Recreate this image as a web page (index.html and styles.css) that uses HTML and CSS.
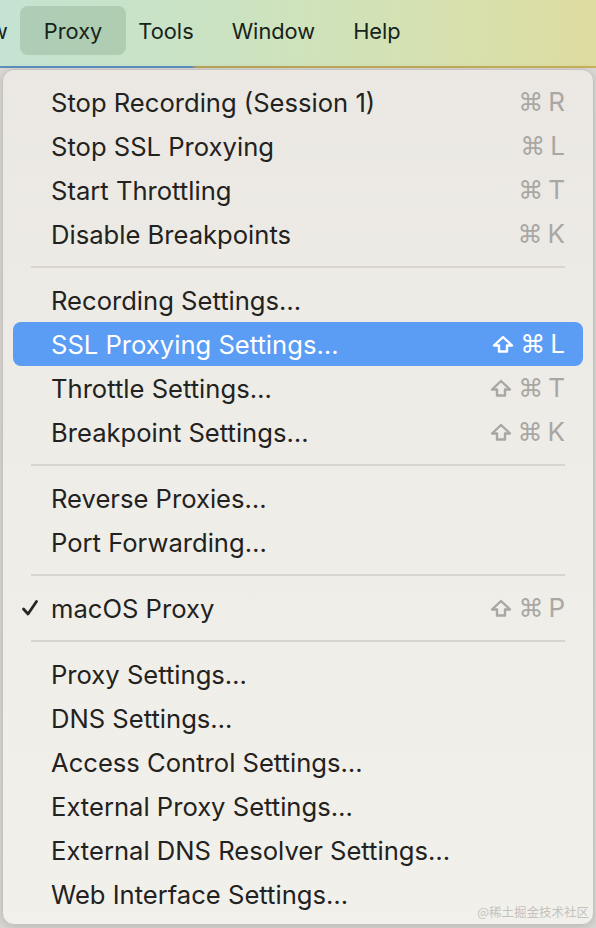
FILE: index.html
```html
<!DOCTYPE html>
<html>
<head>
<meta charset="utf-8">
<link rel="stylesheet" href="styles.css">
</head>
<body>
<div class="screen">
  <div class="menubar">
    <span class="mb-item mb-cut">w</span>
    <span class="mb-item mb-active">Proxy</span>
    <span class="mb-item">Tools</span>
    <span class="mb-item">Window</span>
    <span class="mb-item">Help</span>
  </div>
  <div class="under"></div>
  <div class="menu">
    <div class="row"><span class="check"></span><span class="label">Stop Recording (Session 1)</span><span class="keys"><span class="cmd">⌘</span><span class="key">R</span></span></div>
    <div class="row"><span class="check"></span><span class="label">Stop SSL Proxying</span><span class="keys"><span class="cmd">⌘</span><span class="key">L</span></span></div>
    <div class="row"><span class="check"></span><span class="label">Start Throttling</span><span class="keys"><span class="cmd">⌘</span><span class="key">T</span></span></div>
    <div class="row"><span class="check"></span><span class="label">Disable Breakpoints</span><span class="keys"><span class="cmd">⌘</span><span class="key">K</span></span></div>
    <div class="sep"></div>
    <div class="row"><span class="check"></span><span class="label">Recording Settings…</span></div>
    <div class="row selected"><span class="check"></span><span class="label">SSL Proxying Settings…</span><span class="keys"><svg class="shift" viewBox="0 0 22 18"><path d="M11 2 L20 10.5 H15 V16.5 H7 V10.5 H2 Z" fill="none" stroke="currentColor" stroke-width="2.4" stroke-linejoin="round"/></svg><span class="cmd">⌘</span><span class="key">L</span></span></div>
    <div class="row"><span class="check"></span><span class="label">Throttle Settings…</span><span class="keys"><svg class="shift" viewBox="0 0 22 18"><path d="M11 2 L20 10.5 H15 V16.5 H7 V10.5 H2 Z" fill="none" stroke="currentColor" stroke-width="2.4" stroke-linejoin="round"/></svg><span class="cmd">⌘</span><span class="key">T</span></span></div>
    <div class="row"><span class="check"></span><span class="label">Breakpoint Settings…</span><span class="keys"><svg class="shift" viewBox="0 0 22 18"><path d="M11 2 L20 10.5 H15 V16.5 H7 V10.5 H2 Z" fill="none" stroke="currentColor" stroke-width="2.4" stroke-linejoin="round"/></svg><span class="cmd">⌘</span><span class="key">K</span></span></div>
    <div class="sep"></div>
    <div class="row"><span class="check"></span><span class="label">Reverse Proxies…</span></div>
    <div class="row"><span class="check"></span><span class="label">Port Forwarding…</span></div>
    <div class="sep"></div>
    <div class="row"><span class="check"><svg viewBox="0 0 18 18"><path d="M2.5 10 L7 15 L15.5 2.5" fill="none" stroke="currentColor" stroke-width="2.8" stroke-linecap="round" stroke-linejoin="round"/></svg></span><span class="label">macOS Proxy</span><span class="keys"><svg class="shift" viewBox="0 0 22 18"><path d="M11 2 L20 10.5 H15 V16.5 H7 V10.5 H2 Z" fill="none" stroke="currentColor" stroke-width="2.4" stroke-linejoin="round"/></svg><span class="cmd">⌘</span><span class="key">P</span></span></div>
    <div class="sep"></div>
    <div class="row"><span class="check"></span><span class="label">Proxy Settings…</span></div>
    <div class="row"><span class="check"></span><span class="label">DNS Settings…</span></div>
    <div class="row"><span class="check"></span><span class="label">Access Control Settings…</span></div>
    <div class="row"><span class="check"></span><span class="label">External Proxy Settings…</span></div>
    <div class="row"><span class="check"></span><span class="label">External DNS Resolver Settings…</span></div>
    <div class="row"><span class="check"></span><span class="label">Web Interface Settings…</span></div>
    <div class="watermark">@稀土掘金技术社区</div>
  </div>
</div>
</body>
</html>
```
FILE: styles.css
```css
html, body {
  margin: 0;
  padding: 0;
}
body {
  width: 596px;
  height: 928px;
  overflow: hidden;
  background: #d9d8d4;
  font-family: Inter, "Noto Sans", "Liberation Sans", sans-serif;
}
.screen {
  width: 596px;
  height: 928px;
  position: relative;
  overflow: hidden;
}
.menubar {
  height: 68px;
  box-sizing: border-box;
  padding-top: 6px;
  display: flex;
  align-items: flex-start;
  background: linear-gradient(90deg, #c4e3d2 0%, #c9e3c5 30%, #d3e2b5 65%, #dedc9f 100%);
  color: #17231a;
  font-size: 21.8px;
  overflow: hidden;
}
.mb-item {
  height: 49px;
  display: flex;
  align-items: center;
  padding: 0 19px;
  border-radius: 8px;
  white-space: nowrap;
}
.mb-cut {
  margin-left: -10px;
  padding-left: 0;
}
.mb-active {
  background: rgba(60, 100, 60, 0.17);
  padding: 0 24px;
  margin: 0 -7px;
}
.under {
  height: 2px;
  margin-top: -2px;
  background: linear-gradient(90deg, #5a8fc0 0%, #5a8fc0 32%, #b9a45a 33%, #c8b25a 100%);
}
.menu {
  position: relative;
  margin: 1px 2px 0 2px;
  height: 856px;
  box-sizing: border-box;
  padding: 10px 10px 0 10px;
  background: linear-gradient(180deg, #ebe8e3 0%, #efede8 50%, #f2f0eb 100%);
  border: 1px solid #c6c3be;
  border-radius: 12px;
  box-shadow: 0 2px 8px rgba(0,0,0,0.15);
}
.row {
  height: 44px;
  display: flex;
  align-items: center;
  border-radius: 8px;
  color: #222220;
  font-size: 25.6px;
}
.check {
  width: 38px;
  flex: none;
  display: flex;
  justify-content: flex-start;
  padding-left: 8px;
  box-sizing: border-box;
  color: #262624;
}
.check svg {
  width: 18px;
  height: 18px;
  display: block;
}
.label {
  flex: 1;
  white-space: nowrap;
}
.keys {
  display: flex;
  align-items: center;
  gap: 5px;
  padding-right: 18px;
  color: #a9a7a3;
}
.shift {
  width: 22px;
  height: 18px;
  display: block;
  margin-right: 1px;
}
.cmd {
  font-family: "DejaVu Sans", sans-serif;
  font-size: 25px;
  line-height: 1;
}
.key {
  font-size: 26px;
  line-height: 1;
}
.selected {
  background: #5b9cf5;
  color: #ffffff;
}
.selected .keys {
  color: #ffffff;
}
.sep {
  height: 22px;
  display: flex;
  align-items: center;
  padding: 0 18px;
}
.sep::before {
  content: "";
  flex: 1;
  height: 2px;
  background: #d8d5d0;
}
.watermark {
  position: absolute;
  right: 4px;
  bottom: 3px;
  font-family: "Noto Sans CJK SC", sans-serif;
  font-size: 12.5px;
  color: #c4c2be;
}
```
